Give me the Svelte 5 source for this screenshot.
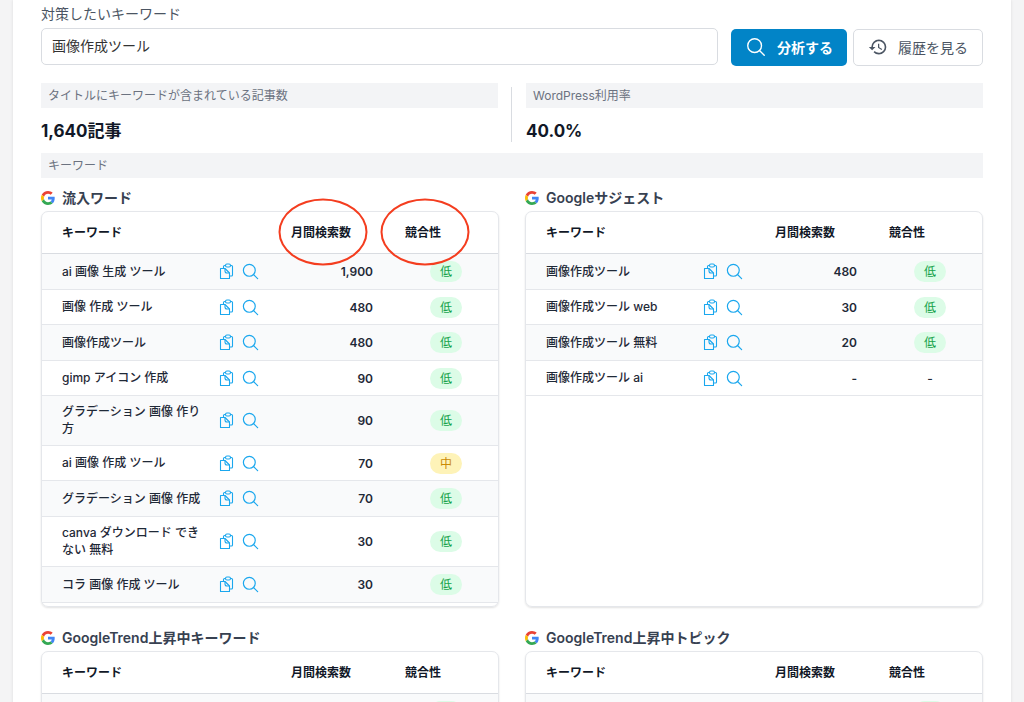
<script lang="ts">
    type Row = { word: string; volume: string; level: string };
    type Panel = { title: string; marked: boolean; tall: boolean; rows: Row[] };

    let keyword = "画像作成ツール";

    const panels: Panel[] = [
        {
            title: "流入ワード",
            marked: true,
            tall: true,
            rows: [
                { word: "ai 画像 生成 ツール", volume: "1,900", level: "低" },
                { word: "画像 作成 ツール", volume: "480", level: "低" },
                { word: "画像作成ツール", volume: "480", level: "低" },
                { word: "gimp アイコン 作成", volume: "90", level: "低" },
                { word: "グラデーション 画像 作り方", volume: "90", level: "低" },
                { word: "ai 画像 作成 ツール", volume: "70", level: "中" },
                { word: "グラデーション 画像 作成", volume: "70", level: "低" },
                { word: "canva ダウンロード できない 無料", volume: "30", level: "低" },
                { word: "コラ 画像 作成 ツール", volume: "30", level: "低" },
            ],
        },
        {
            title: "Googleサジェスト",
            marked: false,
            tall: true,
            rows: [
                { word: "画像作成ツール", volume: "480", level: "低" },
                { word: "画像作成ツール web", volume: "30", level: "低" },
                { word: "画像作成ツール 無料", volume: "20", level: "低" },
                { word: "画像作成ツール ai", volume: "-", level: "-" },
            ],
        },
        {
            title: "GoogleTrend上昇中キーワード",
            marked: false,
            tall: false,
            rows: [{ word: "", volume: "", level: "" }],
        },
        {
            title: "GoogleTrend上昇中トピック",
            marked: false,
            tall: false,
            rows: [{ word: "", volume: "", level: "" }],
        },
    ];
</script>

{#snippet searchIcon()}
    <svg viewBox="0 0 24 24" fill="none" stroke="currentColor" stroke-width="1.5" stroke-linecap="round" aria-hidden="true">
        <circle cx="10.5" cy="10.5" r="7.5" />
        <path d="M15.8 15.8 21 21" />
    </svg>
{/snippet}

<div class="page">
    <main>
        <form on:submit|preventDefault>
            <div class="field">
                <label for="keyword">対策したいキーワード</label>
                <input id="keyword" type="text" bind:value={keyword} />
            </div>
            <button class="primary" type="submit">
                {@render searchIcon()}
                分析する
            </button>
            <button class="secondary" type="button">
                <svg viewBox="0 0 24 24" fill="currentColor" aria-hidden="true">
                    <path d="M13 3a9 9 0 0 0-9 9H1l3.89 3.89.07.14L9 12H6c0-3.87 3.13-7 7-7s7 3.13 7 7-3.13 7-7 7c-1.93 0-3.68-.79-4.94-2.06l-1.42 1.42A8.95 8.95 0 0 0 13 21a9 9 0 0 0 0-18zm-1 5v5l4.28 2.54.72-1.21-3.5-2.08V8H12z" />
                </svg>
                履歴を見る
            </button>
        </form>

        <div class="stats">
            <section>
                <h2>タイトルにキーワードが含まれている記事数</h2>
                <p>1,640記事</p>
            </section>
            <div class="divider"></div>
            <section>
                <h2>WordPress利用率</h2>
                <p>40.0%</p>
            </section>
        </div>

        <h2>キーワード</h2>

        <div class="panels">
            {#each panels as panel}
                <section>
                    <h3>
                        <svg viewBox="0 0 48 48" aria-hidden="true">
                            <path fill="#ea4335" d="M24 9.5c3.54 0 6.71 1.22 9.21 3.6l6.85-6.85C35.9 2.38 30.47 0 24 0 14.62 0 6.51 5.38 2.56 13.22l7.98 6.19C12.43 13.72 17.74 9.5 24 9.5z" />
                            <path fill="#4285f4" d="M46.98 24.55c0-1.57-.15-3.09-.38-4.55H24v9.02h12.94c-.58 2.96-2.26 5.48-4.78 7.18l7.73 6c4.51-4.18 7.09-10.36 7.09-17.65z" />
                            <path fill="#fbbc05" d="M10.53 28.59c-.48-1.45-.76-2.99-.76-4.59s.27-3.14.76-4.59l-7.98-6.19C.92 16.46 0 20.12 0 24c0 3.88.92 7.54 2.56 10.78l7.97-6.19z" />
                            <path fill="#34a853" d="M24 48c6.48 0 11.93-2.13 15.89-5.81l-7.73-6c-2.15 1.45-4.92 2.3-8.16 2.3-6.26 0-11.57-4.22-13.47-9.91l-7.98 6.19C6.51 42.62 14.62 48 24 48z" />
                        </svg>
                        {panel.title}
                    </h3>
                    <div class="card" class:tall={panel.tall}>
                        <table>
                            <colgroup>
                                <col />
                                <col class="col-actions" />
                                <col class="col-volume" />
                                <col class="col-level" />
                            </colgroup>
                            <thead>
                                <tr>
                                    <th class="word" colspan="2">キーワード</th>
                                    <th class="volume"><span class:marked={panel.marked}>月間検索数</span></th>
                                    <th class="level"><span class:marked={panel.marked}>競合性</span></th>
                                </tr>
                            </thead>
                            <tbody>
                                {#each panel.rows as row}
                                    <tr>
                                        <td class="word">{row.word}</td>
                                        <td>
                                            <div class="actions">
                                                <button type="button" aria-label="コピー">
                                                    <svg viewBox="0 0 19 19" fill="none" stroke="currentColor" stroke-width="1.1" stroke-linejoin="round" aria-hidden="true">
                                                        <path d="M3.5 6.5H8l4.500 4.500v5.500h-9z" />
                                                        <path d="M8 6.500V9q0 2 2 2h2.500" />
                                                        <path d="M8.500 3.500h-1a1 1 0 0 0-1 1v2M13.500 3.500h1a1 1 0 0 1 1 1V13a1 1 0 0 1-1 1h-2" />
                                                        <rect x="8.500" y="2" width="5" height="3" rx="1.400" />
                                                    </svg>
                                                </button>
                                                <button type="button" aria-label="検索">
                                                    {@render searchIcon()}
                                                </button>
                                            </div>
                                        </td>
                                        <td class="volume">{row.volume}</td>
                                        <td class="level">
                                            {#if row.level == "-"}
                                                -
                                            {:else}
                                                <span class="pill" class:mid={row.level == "中"}>{row.level}</span>
                                            {/if}
                                        </td>
                                    </tr>
                                {/each}
                            </tbody>
                        </table>
                    </div>
                </section>
            {/each}
        </div>
    </main>
</div>

<style>
    .page {
        height: 100vh;
        overflow: hidden;
        padding: 0 13px;
        box-sizing: border-box;
        background-color: #f4f4f5;
        color: #1f2937;
        font-family: Inter, "Noto Sans CJK JP", sans-serif;
        font-size: 12px;
        font-weight: 500;
        line-height: 17px;
    }
    main {
        min-height: 100%;
        box-sizing: border-box;
        padding: 4px 28px;
        background-color: white;
        box-shadow: 0 0 3px rgba(0, 0, 0, 0.1);
    }
    button,
    input {
        box-sizing: border-box;
        font-family: inherit;
    }
    svg {
        display: block;
        flex: none;
    }
    h2,
    h3,
    p {
        margin: 0;
    }

    form {
        display: flex;
        align-items: flex-end;
    }
    .field {
        flex: 1;
        margin-right: 13px;
        padding-bottom: 1px;
    }
    label {
        display: block;
        margin-bottom: 4px;
        color: #4b5563;
        font-size: 14px;
        font-weight: 400;
        line-height: 20px;
    }
    input {
        display: block;
        width: 100%;
        height: 37px;
        padding: 0 10px 3px;
        border: 1px solid #d9dce1;
        border-radius: 5px;
        color: #333;
        font-size: 14px;
        font-weight: 400;
    }
    form button {
        display: flex;
        align-items: center;
        height: 37px;
        border-radius: 5px;
        font-size: 14px;
        white-space: nowrap;
    }
    .primary {
        gap: 10px;
        margin-right: 6px;
        padding: 0 14px 1px;
        border: none;
        background-color: #0284c7;
        color: white;
        font-weight: 700;
    }
    .primary svg {
        width: 22px;
        height: 22px;
    }
    .secondary {
        gap: 10px;
        padding: 0 14px 1px;
        border: 1px solid #d9dce1;
        background-color: white;
        color: #4b5563;
        font-weight: 400;
    }
    .secondary svg {
        width: 20px;
        height: 20px;
    }

    h2 {
        padding: 4px 7px;
        background-color: #f3f4f6;
        color: #6b7280;
        font-size: 12px;
        font-weight: 400;
        line-height: 17px;
    }
    .stats {
        display: flex;
        margin-top: 17px;
    }
    .stats section {
        flex: 1;
    }
    .stats p {
        padding: 11px 0 9px;
        color: #111827;
        font-size: 17px;
        font-weight: 700;
        line-height: 25px;
    }
    .divider {
        width: 1px;
        margin: 4px 14px 11px 13px;
        background-color: #d9dce1;
    }

    .panels {
        display: grid;
        grid-template-columns: 1fr 1fr;
        gap: 20px 26px;
        margin-top: 9px;
    }
    h3 {
        display: flex;
        align-items: center;
        gap: 7px;
        margin-bottom: 3px;
        color: #374151;
        font-size: 14px;
        font-weight: 600;
        line-height: 21px;
    }
    h3 svg {
        width: 14px;
        height: 14px;
    }
    .card {
        box-sizing: border-box;
        border: 1px solid #e5e7eb;
        border-radius: 7px;
        box-shadow: 0 1px 2px rgba(0, 0, 0, 0.12);
    }
    .tall {
        min-height: 396px;
    }
    table {
        width: 100%;
        table-layout: fixed;
        border-collapse: separate;
        border-spacing: 0;
    }
    .col-actions {
        width: 61px;
    }
    .col-volume {
        width: 124px;
    }
    .col-level {
        width: 104px;
    }
    th,
    td {
        padding: 0;
        border-bottom: 1px solid #e5e7eb;
        text-align: left;
    }
    th {
        height: 41px;
        border-bottom-color: #d9dce1;
        color: #111827;
        font-weight: 700;
    }
    th.volume {
        padding-left: 21px;
    }
    th.level {
        padding-left: 11px;
    }
    td {
        height: 34px;
    }
    tbody tr:nth-child(odd) td {
        height: 35px;
        background-color: #f9fafb;
    }
    .word {
        padding-left: 20px;
    }
    td.word {
        padding-top: 7px;
        padding-bottom: 8px;
        padding-right: 5px;
        height: 19px;
    }
    tbody tr:nth-child(odd) td.word {
        height: 19px;
    }
    td.volume {
        padding-right: 21px;
        text-align: right;
        font-weight: 600;
    }
    td.level {
        text-align: center;
    }
    .actions {
        display: flex;
        gap: 5px;
        padding-left: 8px;
    }
    .actions button {
        padding: 0;
        border: none;
        background: none;
        color: #1aa7ee;
    }
    .actions svg {
        width: 19px;
        height: 19px;
    }
    .pill {
        display: inline-block;
        min-width: 12px;
        min-height: 17px;
        padding: 2px 10px;
        border-radius: 11px;
        background-color: #dcfce7;
        color: #16a34a;
        font-weight: 400;
        vertical-align: middle;
    }
    .mid {
        background-color: #fef3b8;
        color: #ca8a04;
    }

    /* red ring around a column heading */
    .marked {
        position: relative;
    }
    .marked::after {
        content: "";
        position: absolute;
        top: calc(50% - 1px);
        left: calc(50% + 2px);
        width: 89px;
        height: 67px;
        box-sizing: border-box;
        border: 2px solid #f43d1f;
        border-radius: 50%;
        transform: translate(-50%, -50%);
        pointer-events: none;
    }
</style>
